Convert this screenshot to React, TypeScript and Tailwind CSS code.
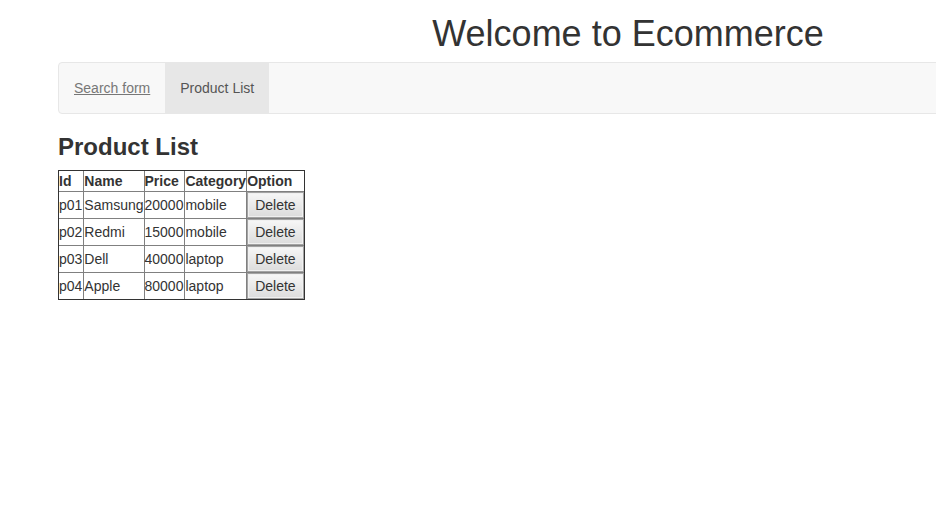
import React from "react";

const products = [
  { id: "p01", name: "Samsung", price: "20000", category: "mobile" },
  { id: "p02", name: "Redmi", price: "15000", category: "mobile" },
  { id: "p03", name: "Dell", price: "40000", category: "laptop" },
  { id: "p04", name: "Apple", price: "80000", category: "laptop" },
];

export default function App() {
  return (
    <div
      className="w-full min-h-screen overflow-hidden bg-white text-[#333] text-[14px] leading-[20px]"
      style={{ fontFamily: '"Liberation Sans", Arial, Helvetica, sans-serif' }}
    >
      <div className="w-[1170px] ml-[43px] px-[15px]">
        <h1 className="text-center text-[36px] leading-[40px] font-normal mt-[14px] mb-[8px]">
          Welcome to Ecommerce
        </h1>
        <nav className="h-[52px] border border-[#e7e7e7] bg-[#f8f8f8] rounded-[4px] mb-[20px] flex">
          <a href="#" className="px-[15px] py-[15px] leading-[20px] text-[#777] underline">
            Search form
          </a>
          <a href="#" className="px-[15px] py-[15px] leading-[20px] text-[#555] bg-[#e7e7e7] no-underline">
            Product List
          </a>
        </nav>
        <h3 className="text-[24px] font-bold leading-[26px] mt-[20px] mb-[10px]">Product List</h3>
        <div className="inline-block border border-[#333]">
          <table className="border-collapse border-hidden">
            <thead>
              <tr>
                <th className="border border-[#808080] p-0 pr-[1px] text-left font-bold leading-[20px]">Id</th>
                <th className="border border-[#808080] p-0 text-left font-bold leading-[20px]">Name</th>
                <th className="border border-[#808080] p-0 pr-[1px] text-left font-bold leading-[20px]">Price</th>
                <th className="border border-[#808080] p-0 text-left font-bold leading-[20px]">Category</th>
                <th className="border border-[#808080] p-0 text-left font-bold leading-[20px]">Option</th>
              </tr>
            </thead>
            <tbody>
              {products.map((p) => (
                <tr key={p.id}>
                  <td className="border border-[#808080] p-0 pr-[1px]">{p.id}</td>
                  <td className="border border-[#808080] p-0">{p.name}</td>
                  <td className="border border-[#808080] p-0 pr-[1px]">{p.price}</td>
                  <td className="border border-[#808080] p-0">{p.category}</td>
                  <td className="border border-[#808080] p-0">
                    <button className="block h-[26px] px-[7px] border border-[#a3a3a3] bg-gradient-to-b from-[#f7f7f7] to-[#dcdcdc] shadow-[inset_0_0_0_1px_#f0f0f0] text-[#333] text-[14px] leading-[20px]">
                      Delete
                    </button>
                  </td>
                </tr>
              ))}
            </tbody>
          </table>
        </div>
      </div>
    </div>
  );
}
